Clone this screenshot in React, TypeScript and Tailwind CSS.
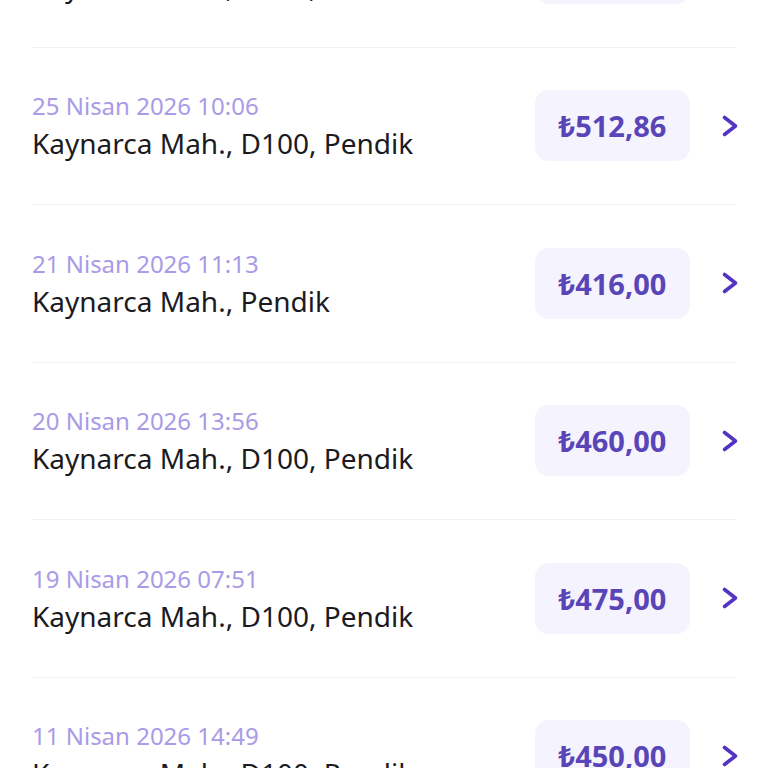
import React from "react";

type Trip = { date: string; place: string; amount: string };

const trips: Trip[] = [
  { date: "27 Nisan 2026 08:12", place: "Kaynarca Mah., D100, Pendik", amount: "₺498,00" },
  { date: "25 Nisan 2026 10:06", place: "Kaynarca Mah., D100, Pendik", amount: "₺512,86" },
  { date: "21 Nisan 2026 11:13", place: "Kaynarca Mah., Pendik", amount: "₺416,00" },
  { date: "20 Nisan 2026 13:56", place: "Kaynarca Mah., D100, Pendik", amount: "₺460,00" },
  { date: "19 Nisan 2026 07:51", place: "Kaynarca Mah., D100, Pendik", amount: "₺475,00" },
  { date: "11 Nisan 2026 14:49", place: "Kaynarca Mah., D100, Pendik", amount: "₺450,00" },
];

function Chevron() {
  return (
    <svg width="20" height="26" viewBox="0 0 20 26" fill="none" className="shrink-0">
      <path d="M4.5 4.5l11 8.5-11 8.5" stroke="#5334c2" strokeWidth="3.6" strokeLinecap="round" strokeLinejoin="round" />
    </svg>
  );
}

export default function App() {
  return (
    <div className="h-[768px] w-[768px] overflow-hidden bg-white font-['Noto_Sans',sans-serif]">
      <div className="-mt-[110px] px-8">
        {trips.map((t) => (
          <div key={t.date} className="flex h-[157.5px] items-center border-b border-[#f2f2f5]">
            <div className="flex flex-1 flex-col pt-[1px]">
              <span className="text-[24px] leading-[34px] text-[#a99be8]">{t.date}</span>
              <span className="text-[28px] leading-[40px] text-[#1b1b1f]">{t.place}</span>
            </div>
            <div className="flex h-[71px] w-[155px] items-center justify-center rounded-[14px] bg-[#f5f3fd]">
              <span className="text-[29px] font-bold text-[#5a45b8]">{t.amount}</span>
            </div>
            <div className="-mr-[4px] ml-[30px] flex items-center">
              <Chevron />
            </div>
          </div>
        ))}
      </div>
    </div>
  );
}
